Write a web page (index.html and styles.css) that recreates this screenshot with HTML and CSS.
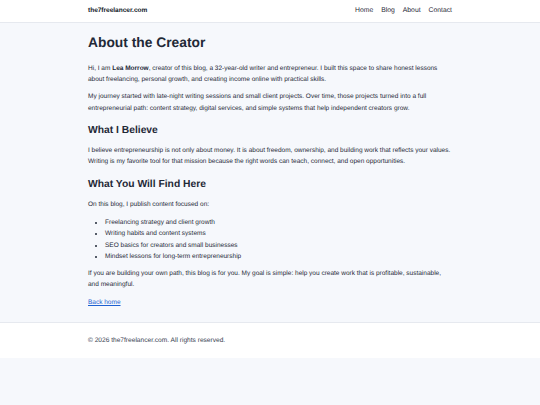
FILE: index.html
```html
<!DOCTYPE html>
<html lang="en">
<head>
<meta charset="utf-8">
<title>About the Creator</title>
<link rel="stylesheet" href="styles.css">
</head>
<body>
<header class="site-header">
  <div class="container header-inner">
    <a class="logo" href="#">the7freelancer.com</a>
    <nav class="nav">
      <a href="#">Home</a>
      <a href="#">Blog</a>
      <a href="#">About</a>
      <a href="#">Contact</a>
    </nav>
  </div>
</header>
<main class="container content">
  <h1>About the Creator</h1>
  <p>Hi, I am <strong>Lea Morrow</strong>, creator of this blog, a 32-year-old writer and entrepreneur. I built this space to share honest lessons about freelancing, personal growth, and creating income online with practical skills.</p>
  <p>My journey started with late-night writing sessions and small client projects. Over time, those projects turned into a full entrepreneurial path: content strategy, digital services, and simple systems that help independent creators grow.</p>
  <h2>What I Believe</h2>
  <p>I believe entrepreneurship is not only about money. It is about freedom, ownership, and building work that reflects your values. Writing is my favorite tool for that mission because the right words can teach, connect, and open opportunities.</p>
  <h2>What You Will Find Here</h2>
  <p>On this blog, I publish content focused on:</p>
  <ul>
    <li>Freelancing strategy and client growth</li>
    <li>Writing habits and content systems</li>
    <li>SEO basics for creators and small businesses</li>
    <li>Mindset lessons for long-term entrepreneurship</li>
  </ul>
  <p>If you are building your own path, this blog is for you. My goal is simple: help you create work that is profitable, sustainable, and meaningful.</p>
  <p class="back-row"><a class="back" href="#">Back home</a></p>
</main>
<footer class="site-footer">
  <div class="container">
    <p>&copy; 2026 the7freelancer.com. All rights reserved.</p>
  </div>
</footer>
</body>
</html>
```
FILE: styles.css
```css
* { box-sizing: border-box; }
html, body {
  margin: 0;
  padding: 0;
}
body {
  background: #f6f8fc;
  color: #1f2937;
  font-family: "Liberation Sans", Arial, sans-serif;
  font-size: 6.5px;
  line-height: 11.2px;
  text-rendering: geometricPrecision;
  -webkit-font-smoothing: antialiased;
}
.container {
  max-width: 380px;
  margin: 0 auto;
  padding: 0 8px;
}
.site-header {
  background: #ffffff;
  border-bottom: 1px solid #e6e9ef;
}
.header-inner {
  height: 22px;
  display: flex;
  align-items: center;
  justify-content: space-between;
}
.logo {
  color: #111827;
  font-weight: 700;
  text-decoration: none;
}
.nav {
  display: flex;
  gap: 8px;
}
.nav a {
  color: #1f2937;
  text-decoration: none;
  font-size: 6.8px;
}
.content {
  padding-top: 12px;
  padding-bottom: 7.5px;
}
h1 {
  font-size: 13.8px;
  line-height: 1.2;
  margin: 0 0 11.5px;
  color: #1f2937;
}
h2 {
  font-size: 10.3px;
  line-height: 1.2;
  margin: 11px 0 8px;
  color: #1f2937;
}
p {
  margin: 0 0 6px;
}
ul {
  margin: 7px 0 6px;
  padding-left: 17px;
}
.back-row {
  margin-top: 6.5px;
}
.back {
  color: #1d5fd1;
  text-decoration: underline;
}
.site-footer {
  background: #ffffff;
  border-top: 1px solid #e6e9ef;
  padding: 12px 0;
  color: #374151;
  font-size: 6.6px;
}
.site-footer p {
  margin: 0;
}
```
